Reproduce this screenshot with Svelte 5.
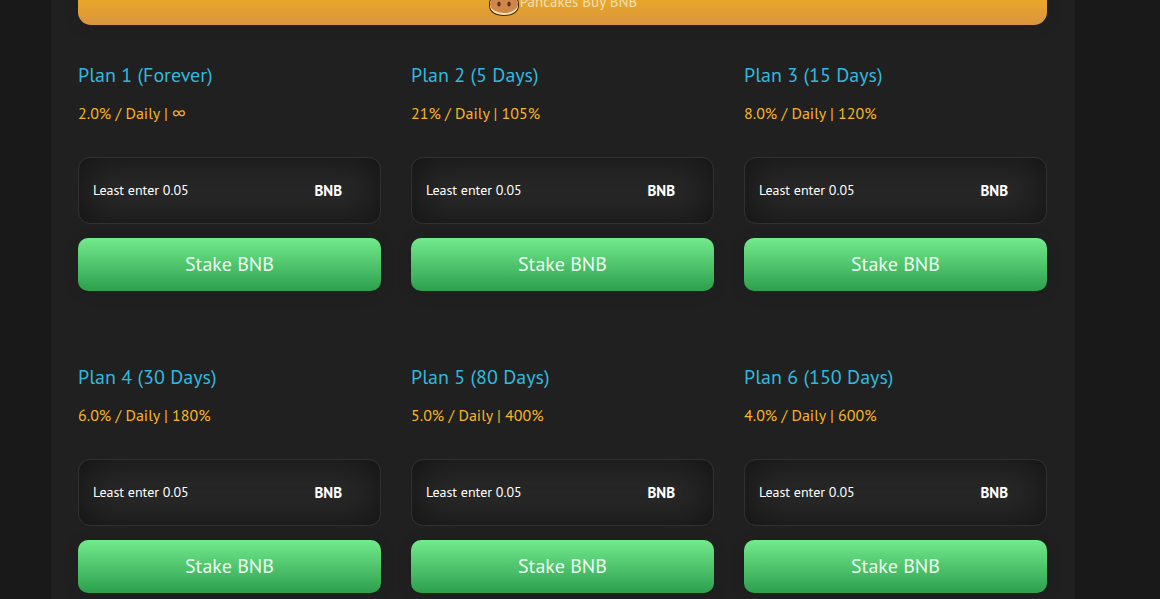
<script>
    const plans = [
        { id: 1, length: 'Forever', daily: '2.0%', total: '∞' },
        { id: 2, length: '5 Days', daily: '21%', total: '105%' },
        { id: 3, length: '15 Days', daily: '8.0%', total: '120%' },
        { id: 4, length: '30 Days', daily: '6.0%', total: '180%' },
        { id: 5, length: '80 Days', daily: '5.0%', total: '400%' },
        { id: 6, length: '150 Days', daily: '4.0%', total: '600%' }
    ];

    let amounts = $state(plans.map(() => ''));

    function stake(event, plan, index) {
        event.preventDefault();
        console.log('Stake - Plan:', plan.id, 'Amount:', amounts[index]);
    }
</script>

<div class="page">
    <main class="panel">
        <button class="buy" type="button">
            <svg class="pancake" viewBox="0 0 32 32" aria-hidden="true">
                <path d="M5 14V5q0-4 3-4t3 4v5h10V5q0-4 3-4t3 4v9" fill="#cf8649" stroke="#633c1c" />
                <path d="M1 19C1 12 7 9 16 9s15 3 15 10v2c0 6-6 10-15 10S1 27 1 21z" fill="#4a2810" />
                <path d="M2 19C2 13 8 10 16 10s14 3 14 9v2c0 5-6 9-14 9S2 26 2 21z" fill="#fbe3a2" />
                <ellipse cx="16" cy="19" rx="14" ry="9" fill="#cf8649" />
                <ellipse cx="11" cy="19" rx="1.7" ry="2.6" fill="#58301a" />
                <ellipse cx="21" cy="19" rx="1.7" ry="2.6" fill="#58301a" />
            </svg>
            <span>Pancakes Buy BNB</span>
        </button>

        <div class="plans">
            {#each plans as plan, i}
                <form class="plan" onsubmit={(e) => stake(e, plan, i)}>
                    <h2>Plan {plan.id} ({plan.length})</h2>
                    <p>{plan.daily} / Daily | {plan.total}</p>
                    <label class="amount">
                        <input type="text" placeholder="Least enter 0.05" bind:value={amounts[i]} />
                        <span>BNB</span>
                    </label>
                    <button class="stake" type="submit">Stake BNB</button>
                </form>
            {/each}
        </div>
    </main>
</div>

<style>
:global(body) {
    margin: 0;
    background: #191919;
}

.page {
    display: flex;
    justify-content: center;
    min-height: 100vh;
    padding-right: 34px;
    box-sizing: border-box;
    overflow: hidden;
    font-family: "PT Sans", Lato, "Noto Sans", sans-serif;
    color: #fff;
}

.panel {
    width: 100%;
    max-width: 1024px;
    padding: 0 28px 6px 27px;
    box-sizing: border-box;
    background: #202020;
}

button {
    display: flex;
    align-items: center;
    justify-content: center;
    width: 100%;
    padding: 0 0 2px;
    border: none;
    border-radius: 10px;
    font-family: inherit;
    cursor: pointer;
}

/* the top of the banner runs off the page */
.buy {
    height: 52px;
    margin-top: -27px;
    padding: 4px 0 0;
    border-radius: 13px;
    background: linear-gradient(#e9b31a, #e7a629 55%, #da9440);
    box-shadow: 0 2px 16px rgba(0, 0, 0, 0.1);
    color: #f2dfb4;
    font-size: 15px;
}

.pancake {
    width: 32px;
    height: 32px;
}

.plans {
    display: grid;
    grid-template-columns: repeat(3, 1fr);
    gap: 72px 30px;
    padding-top: 36px;
}

.plan h2 {
    margin: 0;
    color: #33b8dd;
    font-size: 20px;
    font-weight: 400;
    line-height: 28px;
}

.plan p {
    margin: 12px 0 32px;
    color: #f5b52c;
    font-size: 16px;
    line-height: 24px;
}

.amount {
    display: flex;
    align-items: center;
    height: 67px;
    margin-bottom: 14px;
    padding: 0 38px 0 14px;
    box-sizing: border-box;
    border: 1px solid #303030;
    border-radius: 12px;
    background: #292929;
    box-shadow: inset 0 0 40px #111;
}

.amount input {
    flex: 1;
    min-width: 0;
    padding: 0 0 2px;
    border: none;
    outline: none;
    background: transparent;
    color: #fff;
    font-family: inherit;
    font-size: 14px;
}

.amount input::placeholder {
    color: #fff;
    opacity: 1;
}

.amount span {
    font-size: 15px;
    font-weight: 700;
}

.stake {
    height: 53px;
    background: linear-gradient(#73ea8d, #2d9f4d);
    box-shadow: 0 2px 16px rgba(0, 0, 0, 0.1);
    color: #ecfff0;
    font-size: 20px;
}

@media (max-width: 760px) {
    .page {
        padding-right: 0;
    }

    .plans {
        grid-template-columns: 1fr;
    }
}
</style>
